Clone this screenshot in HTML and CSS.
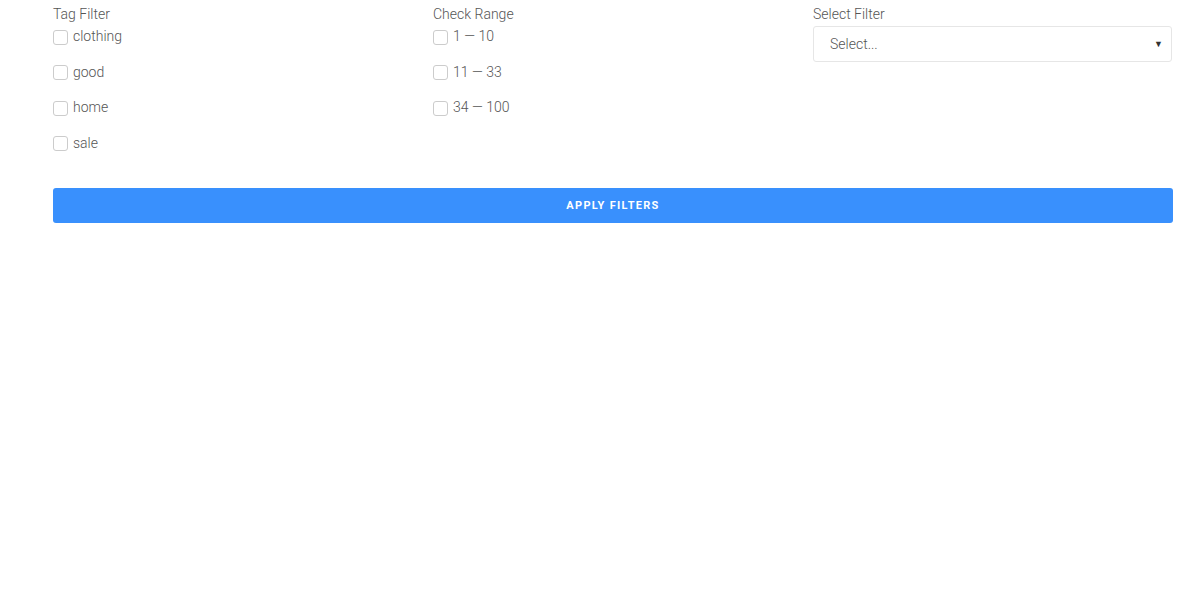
FILE: index.html
```html
<!DOCTYPE html>
<html lang="en">
<head>
  <meta charset="UTF-8" />
  <title>Filters</title>
  <link rel="stylesheet" href="styles.css">
</head>
<body>
  <div class="filters">
    <div class="columns">
      <div class="group">
        <div class="title">Tag Filter</div>
        <label class="option"><span class="box"></span>clothing</label>
        <label class="option"><span class="box"></span>good</label>
        <label class="option"><span class="box"></span>home</label>
        <label class="option"><span class="box"></span>sale</label>
      </div>
      <div class="group">
        <div class="title">Check Range</div>
        <label class="option"><span class="box"></span>1 — 10</label>
        <label class="option"><span class="box"></span>11 — 33</label>
        <label class="option"><span class="box"></span>34 — 100</label>
      </div>
      <div class="group">
        <div class="title">Select Filter</div>
        <div class="select">
          <span>Select...</span>
          <span class="arrow">▼</span>
        </div>
      </div>
    </div>
    <button class="apply">APPLY FILTERS</button>
  </div>
</body>
</html>
```

FILE: styles.css
```css
* {
  box-sizing: border-box;
}
body {
  margin: 0;
  background: #fff;
  font-family: Roboto, 'Noto Sans', sans-serif;
  font-weight: 300;
  font-size: 14px;
  color: #555;
}
.filters {
  width: 1120px;
  margin-left: 53px;
  padding-top: 4px;
}
.columns {
  display: grid;
  grid-template-columns: 360px 360px 359px;
  gap: 20px;
}
.title {
  line-height: 20px;
  margin-bottom: 2px;
}
.option {
  display: flex;
  align-items: center;
  gap: 5px;
  height: 20px;
  line-height: 20px;
  margin-bottom: 15.5px;
}
.box {
  width: 15px;
  height: 15px;
  border: 1px solid #ccc;
  border-radius: 3px;
  margin-top: 2px;
}
.select {
  display: flex;
  justify-content: space-between;
  align-items: center;
  height: 36px;
  border: 1px solid #e6e6e6;
  border-radius: 3px;
  padding: 0 8px 0 16px;
}
.arrow {
  font-size: 9px;
  color: #333;
}
.apply {
  display: block;
  width: 100%;
  height: 35px;
  margin-top: 20px;
  border: none;
  border-radius: 3px;
  background: #3990fd;
  color: #fff;
  font-family: Roboto, sans-serif;
  font-weight: 700;
  font-size: 11px;
  letter-spacing: 1.3px;
}
```
